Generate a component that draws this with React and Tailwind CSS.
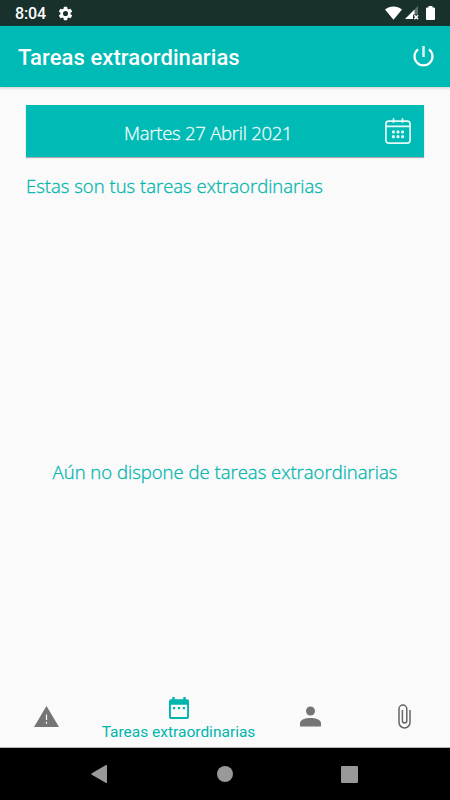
import React from "react";

const body = "font-['Open_Sans','Lato',sans-serif] font-light whitespace-nowrap [-webkit-text-stroke:0.3px]";

function StatusBar() {
  return (
    <div className="flex h-[26px] shrink-0 items-center border-b border-[#0c403c] bg-[#18312d] pl-[15px] pr-[15px] text-white">
      <span className="mt-[3px] w-[32px] whitespace-nowrap text-[16px] leading-none tracking-[-0.1px] font-medium">8:04</span>
      <svg className="ml-[10px] mt-px" width="17" height="17" viewBox="0 0 24 24" fill="currentColor">
        <path d="M19.14 12.94c.04-.3.06-.61.06-.94s-.02-.64-.07-.94l2.03-1.58a.49.49 0 0 0 .12-.61l-1.92-3.32a.49.49 0 0 0-.59-.22l-2.39.96a7 7 0 0 0-1.62-.94l-.36-2.54a.48.48 0 0 0-.48-.41h-3.84a.47.47 0 0 0-.47.41l-.36 2.54c-.59.24-1.13.57-1.62.94l-2.39-.96a.48.48 0 0 0-.59.22L2.74 8.87a.47.47 0 0 0 .12.61l2.03 1.58a7.4 7.4 0 0 0 0 1.88l-2.03 1.58a.49.49 0 0 0-.12.61l1.92 3.32c.12.22.37.29.59.22l2.39-.96c.5.38 1.03.7 1.62.94l.36 2.54c.05.24.24.41.48.41h3.84c.24 0 .44-.17.47-.41l.36-2.54a7 7 0 0 0 1.62-.94l2.39.96c.22.08.47 0 .59-.22l1.92-3.32a.47.47 0 0 0-.12-.61zM12 15.6a3.6 3.6 0 1 1 0-7.2 3.6 3.6 0 0 1 0 7.2" />
      </svg>
      <svg className="ml-auto" width="17" height="14" viewBox="0 0 17 14" fill="currentColor">
        <path d="M0 3.4C4.9-.5 12.1-.5 17 3.4L8.5 13.8Z" />
      </svg>
      <svg className="ml-[3px]" width="14" height="14" viewBox="0 0 14 14">
        <path d="M13 0v8.5H8V13H0Z" fill="#5d6f6b" />
        <path d="M9.5 3.5v5H8V13H0Z" fill="white" />
        <path d="m9.3 9.3 3.8 3.8m0-3.8-3.8 3.8" stroke="white" strokeWidth="1.5" />
      </svg>
      <svg className="ml-[7px]" width="9" height="14" viewBox="0 0 9 14" fill="currentColor">
        <path d="M2.5 0h4v1.4H8q1 0 1 1V13q0 1-1 1H1q-1 0-1-1V2.4q0-1 1-1h1.5Z" />
      </svg>
    </div>
  );
}

function Header() {
  return (
    <header className="flex h-[61px] shrink-0 items-center justify-between bg-[#00bab5] pl-[18px] pr-[16px] text-white shadow-[0_1px_3px_rgba(0,0,0,0.2)]">
      <h1 className="mt-[3px] whitespace-nowrap text-[22px] font-medium leading-none tracking-[0.08px]">Tareas extraordinarias</h1>
      <svg className="-mt-[2px]" width="21" height="22" viewBox="0 0 21 22" fill="none" stroke="currentColor" strokeWidth="2.2">
        <path d="M10.5 1v11" stroke="#d5f3f2" strokeWidth="2.6" />
        <path d="M5 4.3a9 9 0 1 0 11 0" />
      </svg>
    </header>
  );
}

function DateCalendar() {
  return (
    <svg width="26" height="26" viewBox="0 0 26 26" fill="none" stroke="#e5faf8" strokeWidth="1.7">
      <rect x="0.9" y="3.2" width="24.2" height="21.9" rx="2.8" />
      <path d="M1 8.3h24M8.5 0.2v4.5M17.5 0.2v4.5" />
      <g fill="#e5faf8" stroke="none">
        <circle cx="8.4" cy="13.9" r="1.6" /><circle cx="13" cy="13.9" r="1.6" /><circle cx="17.6" cy="13.9" r="1.6" />
        <circle cx="8.4" cy="18.7" r="1.6" /><circle cx="13" cy="18.7" r="1.6" /><circle cx="17.6" cy="18.7" r="1.6" />
      </g>
    </svg>
  );
}

function BottomNav() {
  return (
    <nav className="grid h-[63px] shrink-0 grid-cols-[93px_171px_93px_93px] border-b border-[#b5b5b5] text-[#757575]">
      <div className="flex justify-center pt-[21px]">
        <svg width="25" height="21" viewBox="0 0 25 21">
          <path d="M12.5 0 25 21H0Z" fill="currentColor" />
          <path d="M12.5 8.5v5.6M12.5 15.8v2" stroke="#fafafa" strokeWidth="1.2" />
        </svg>
      </div>
      <div className="flex flex-col items-center pt-[12px] text-[#00b5ad]">
        <svg width="20" height="22" viewBox="0 0 20 22">
          <path fill="currentColor" fillRule="evenodd" d="M3.3 0h2.4v2.2h8.6V0h2.4v2.2H18q2 0 2 2V20q0 2-2 2H2q-2 0-2-2V4.2q0-2 2-2h1.3ZM1.9 7.8V20H18.1V7.8Z" />
          <path fill="currentColor" d="M4 10h2.2v2.2H4ZM8.9 10h2.2v2.2H8.9ZM13.8 10h2.2v2.2h-2.2Z" />
        </svg>
        <span className="mt-[4px] whitespace-nowrap text-[15.5px] leading-[18px]">Tareas extraordinarias</span>
      </div>
      <div className="flex justify-center pt-[21px]">
        <svg width="21" height="21" viewBox="0 0 21 21" fill="currentColor">
          <circle cx="10.5" cy="5" r="4.5" />
          <path d="M0 20.5v-3.2c0-7 21-7 21 0v3.2Z" />
        </svg>
      </div>
      <div className="flex justify-center pl-px pt-[19px] text-[#666]">
        <svg width="13" height="25" viewBox="0 0 13 25" fill="none" stroke="currentColor" strokeWidth="1.5">
          <path d="M12 6v12.5a5.5 5.5 0 0 1-11 0V5a3.9 3.9 0 0 1 7.8 0v11.8a2.2 2.2 0 0 1-4.4 0V6" />
        </svg>
      </div>
    </nav>
  );
}

function SystemNav() {
  return (
    <div className="flex h-[52px] shrink-0 items-center bg-black pl-[91px] pr-[92px] text-[#999]">
      <svg width="16" height="18" viewBox="0 0 16 18" fill="currentColor"><path d="M15 0q1-.3 1 .8v16.4q0 1.1-1 .8L.8 9.7q-.9-.7 0-1.4Z" /></svg>
      <span className="ml-[110px] size-[16px] rounded-full bg-[#999]" />
      <span className="ml-auto size-[17px] rounded-[1px] bg-[#999]" />
    </div>
  );
}

export default function App() {
  return (
    <div className="flex h-[800px] w-[450px] flex-col overflow-hidden bg-[#fafafa] font-['Roboto',sans-serif]">
      <StatusBar />
      <Header />
      <main className="flex min-h-0 flex-1 flex-col px-[26px] pt-[18px] text-[#00b5ad]">
        <div className="flex h-[52px] shrink-0 items-center bg-[#00bab5] pr-[13px] text-[#f0fcfb] shadow-[0_1px_1px_rgba(0,0,0,0.3)]">
          <span className={`${body} ml-[98px] mt-[4px] text-[18.5px] leading-none tracking-[-0.25px]`}>Martes 27 Abril 2021</span>
          <span className="ml-auto"><DateCalendar /></span>
        </div>
        <p className={`${body} mt-[19px] text-[18.5px] leading-[20px]`}>Estas son tus tareas extraordinarias</p>
        <p className={`${body} mt-[266px] text-center text-[18.5px] leading-[20px]`}>Aún no dispone de tareas extraordinarias</p>
      </main>
      <BottomNav />
      <SystemNav />
    </div>
  );
}
